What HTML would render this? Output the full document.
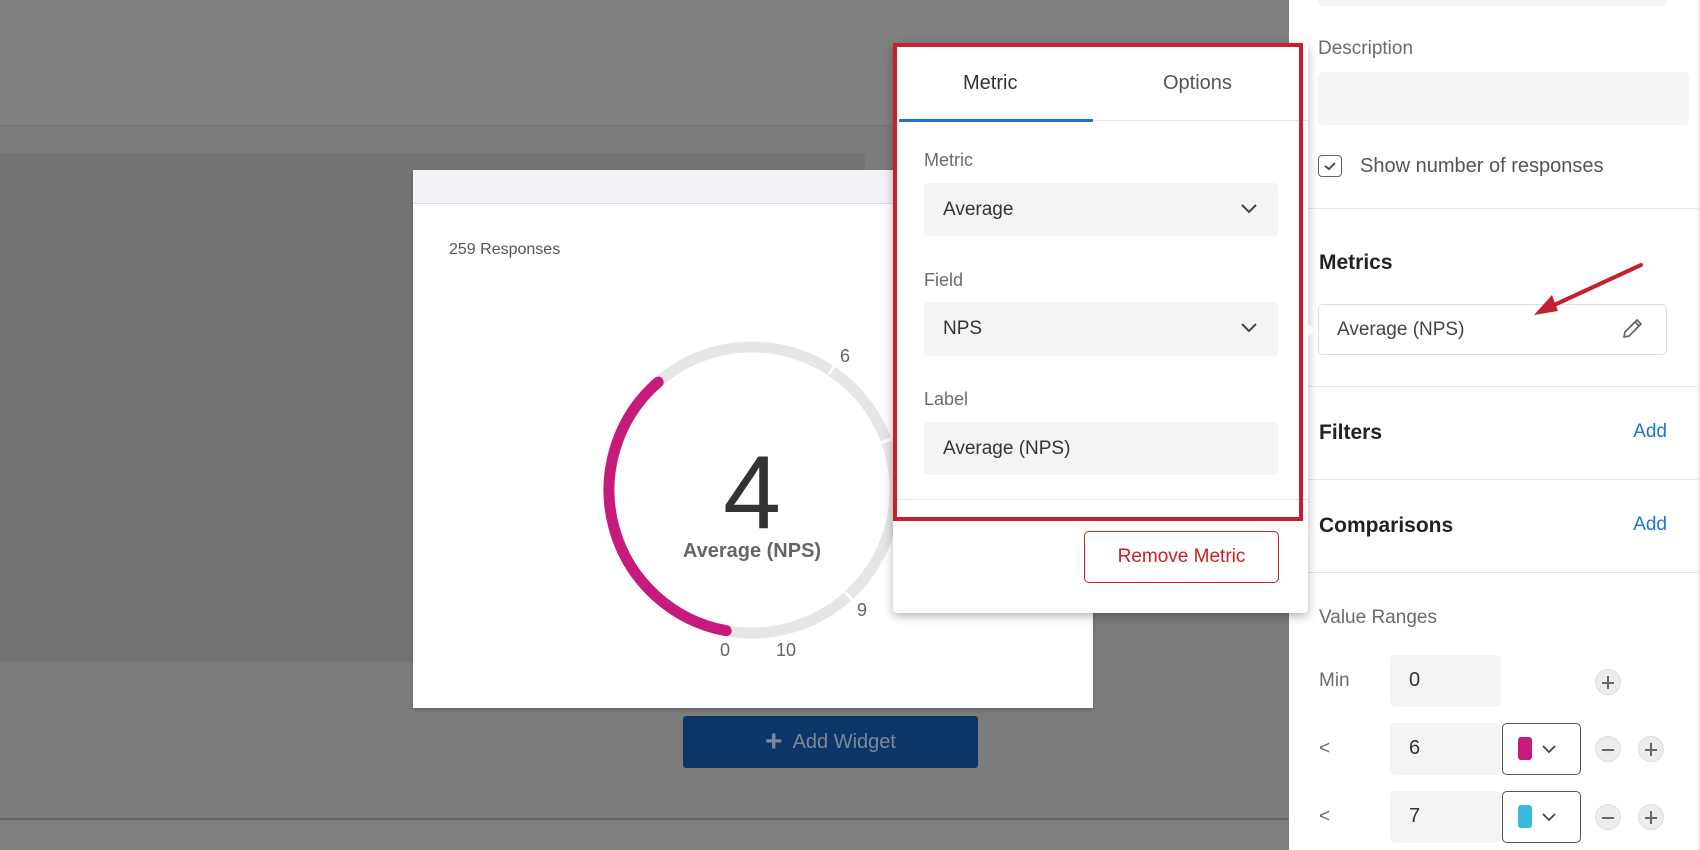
<!DOCTYPE html>
<html><head><meta charset="utf-8"><style>
*{margin:0;padding:0;box-sizing:border-box}
body{width:1700px;height:850px;position:relative;overflow:hidden;background:#7c7c7c;font-family:"Liberation Sans",sans-serif}
.a{position:absolute}
.sel{position:absolute;background:#f4f4f4;border-radius:4px;font-size:19px;color:#333;padding-left:19px;display:flex;align-items:center}
.lbl{position:absolute;font-size:18px;color:#6b6b6b}
.hd{position:absolute;left:1319px;font-size:21px;font-weight:bold;color:#222}
.add{position:absolute;right:33px;font-size:19px;color:#1a73d9}
.dv{position:absolute;left:1308px;right:0;height:1px;background:#e3e3e3}
.circ{position:absolute;width:26px;height:26px;border-radius:50%;background:#ececec;border:1px solid #ddd}
.circ:before{content:"";position:absolute;left:6px;top:12px;width:12px;height:1.6px;background:#666}
.plus:after{content:"";position:absolute;left:11.2px;top:6px;width:1.6px;height:13px;background:#666}
</style></head><body>
<div class="a" style="left:0;top:0;width:1289px;height:125px;background:#808080"></div>
<div class="a" style="left:0;top:125px;width:1289px;height:2px;background:#777"></div>
<div class="a" style="left:0;top:153px;width:865px;height:509px;background:#747474"></div>
<div class="a" style="left:0;top:818px;width:1289px;height:2px;background:#666"></div>
<div class="a" style="left:0;top:820px;width:1289px;height:30px;background:#808080"></div>

<!-- sidebar -->
<div class="a" style="left:1289px;top:0;width:411px;height:850px;background:#fff"></div>
<div class="a" style="left:1698px;top:0;width:2px;height:850px;background:#eee"></div>
<div class="a" style="left:1318px;top:-10px;width:349px;height:16px;background:#f4f4f4;border-radius:5px"></div>
<div class="a" style="left:1318px;top:38px;font-size:19px;color:#6b6b6b">Description</div>
<div class="a" style="left:1318px;top:72px;width:371px;height:53px;background:#f4f4f4;border-radius:5px"></div>
<div class="a" style="left:1318px;top:155px;width:24px;height:22px;border:1.5px solid #666;border-radius:4px"></div>
<svg class="a" style="left:1318px;top:155px" width="24" height="22"><path d="M7 11 L11 14 L17 8" fill="none" stroke="#444" stroke-width="1.8"/></svg>
<div class="a" style="left:1360px;top:155px;font-size:20px;color:#555">Show number of responses</div>
<div class="dv" style="top:208px"></div>
<div class="hd" style="top:251px">Metrics</div>
<div class="a" style="left:1318px;top:304px;width:349px;height:51px;border:1px solid #ddd;border-radius:5px"></div>
<div class="a" style="left:1337px;top:319px;font-size:19px;color:#444">Average (NPS)</div>
<svg class="a" style="left:1620px;top:316px" width="26" height="26"><path d="M4 21 L5 16 L17 4 L21 8 L9 20 Z M15 6 L19 10" fill="none" stroke="#666" stroke-width="1.8" stroke-linejoin="round"/></svg>
<svg class="a" style="left:1290px;top:250px" width="400" height="80"><line x1="351" y1="15" x2="262" y2="56" stroke="#c6202e" stroke-width="4" stroke-linecap="round"/><path d="M244 65 L262 45 L268 61 Z" fill="#c6202e"/></svg>
<div class="dv" style="top:386px"></div>
<div class="hd" style="top:421px">Filters</div><div class="add" style="top:421px">Add</div>
<div class="dv" style="top:479px"></div>
<div class="hd" style="top:514px">Comparisons</div><div class="add" style="top:514px">Add</div>
<div class="dv" style="top:572px"></div>
<div class="a" style="left:1319px;top:607px;font-size:19px;color:#6b6b6b">Value Ranges</div>
<div class="a" style="left:1319px;top:670px;font-size:19px;color:#6b6b6b">Min</div>
<div class="a" style="left:1390px;top:655px;width:111px;height:52px;background:#f4f4f4;border-radius:5px;font-size:20px;color:#333;padding:14px 0 0 19px">0</div>
<div class="circ plus" style="left:1595px;top:669px"></div>
<div class="a" style="left:1319px;top:738px;font-size:19px;color:#6b6b6b">&lt;</div>
<div class="a" style="left:1390px;top:723px;width:111px;height:52px;background:#f4f4f4;border-radius:5px;font-size:20px;color:#333;padding:14px 0 0 19px">6</div>
<div class="a" style="left:1502px;top:723px;width:79px;height:52px;border:1.5px solid #555;border-radius:5px"></div>
<div class="a" style="left:1518px;top:737px;width:14px;height:23px;background:#c61a7c;border-radius:3px"></div>
<div class="circ" style="left:1595px;top:736px"></div><div class="circ plus" style="left:1638px;top:736px"></div>
<div class="a" style="left:1319px;top:806px;font-size:19px;color:#6b6b6b">&lt;</div>
<div class="a" style="left:1390px;top:791px;width:111px;height:52px;background:#f4f4f4;border-radius:5px;font-size:20px;color:#333;padding:14px 0 0 19px">7</div>
<div class="a" style="left:1502px;top:791px;width:79px;height:52px;border:1.5px solid #555;border-radius:5px"></div>
<div class="a" style="left:1518px;top:805px;width:14px;height:23px;background:#3bb8e0;border-radius:3px"></div>
<div class="circ" style="left:1595px;top:804px"></div><div class="circ plus" style="left:1638px;top:804px"></div>
<svg class="a" style="left:1540px;top:740px" width="20" height="90"><path d="M3 6 L9 12 L15 6" fill="none" stroke="#444" stroke-width="1.8"/><path d="M3 74 L9 80 L15 74" fill="none" stroke="#444" stroke-width="1.8"/></svg>

<!-- card -->
<div class="a" style="left:413px;top:170px;width:680px;height:538px;background:#fff;box-shadow:0 2px 4px rgba(0,0,0,.2)">
 <div class="a" style="left:0;top:0;width:680px;height:34px;background:#f3f3f7;border-bottom:1px solid #ddd"></div>
 <div class="a" style="left:36px;top:71px;font-size:16px;color:#555">259 Responses</div>
</div>
<svg class="a" style="left:0;top:0" width="1100" height="720">
 <circle cx="752" cy="490" r="143" fill="none" stroke="#e6e6e6" stroke-width="11" stroke-dasharray="687 212" transform="rotate(229 752 490)" stroke-linecap="round"/>
 <path d="M 726.2 630.7 A 143 143 0 0 1 658.2 382.1" fill="none" stroke="#c61a7c" stroke-width="11" stroke-linecap="round"/>
 <g stroke="#fff" stroke-width="3">
  <line x1="829" y1="374" x2="843" y2="352"/>
  <line x1="845" y1="592" x2="860" y2="608"/>
  <line x1="880" y1="443" x2="902" y2="435"/>
 </g>
 <g font-family="Liberation Sans" font-size="18" fill="#666" text-anchor="middle">
  <text x="845" y="362">6</text><text x="862" y="616">9</text><text x="725" y="656">0</text><text x="786" y="656">10</text>
 </g>
 <text x="752" y="528" font-family="Liberation Sans" font-size="104" font-weight="300" fill="#333" text-anchor="middle">4</text>
 <text x="752" y="557" font-family="Liberation Sans" font-size="20" font-weight="bold" fill="#666" text-anchor="middle">Average (NPS)</text>
</svg>

<div class="a" style="left:683px;top:716px;width:295px;height:52px;background:#0d3668;border-radius:3px;color:#7d8896;font-size:20px;display:flex;align-items:center;justify-content:center"><span style="font-size:30px;font-weight:bold;margin-right:10px;color:#7d8896">+</span>Add Widget</div>

<!-- popup -->
<div class="a" style="left:893px;top:43px;width:415px;height:570px;background:#fff;border-radius:4px;box-shadow:0 3px 10px rgba(0,0,0,.3)">
 <div class="a" style="left:0;top:77px;width:415px;height:1px;background:#e5e5e5"></div>
 <div class="a" style="left:6px;top:76px;width:194px;height:3px;background:#1a73d9"></div>
 <div class="a" style="left:70px;top:29px;font-size:20px;color:#333">Metric</div>
 <div class="a" style="left:270px;top:29px;font-size:20px;color:#555">Options</div>
 <div class="a" style="left:0;top:456px;width:415px;height:1px;background:#e5e5e5"></div>
 <div class="a" style="left:191px;top:488px;width:195px;height:52px;border:1.5px solid #c62128;border-radius:5px;color:#c62128;font-size:19px;display:flex;align-items:center;justify-content:center">Remove Metric</div>
</div>
<div class="a" style="left:1306px;top:322px;width:0;height:0;border:8px solid transparent;border-left-color:#fff"></div>
<div class="a" style="left:893px;top:43px;width:410px;height:478px;border:4px solid #c6202e"></div>
<div class="lbl" style="left:924px;top:150px">Metric</div>
<div class="sel" style="left:924px;top:183px;width:354px;height:53px">Average</div>
<div class="lbl" style="left:924px;top:270px">Field</div>
<div class="sel" style="left:924px;top:302px;width:354px;height:54px">NPS</div>
<div class="lbl" style="left:924px;top:389px">Label</div>
<div class="sel" style="left:924px;top:422px;width:354px;height:53px">Average (NPS)</div>
<svg class="a" style="left:1240px;top:200px" width="20" height="140"><path d="M2 5 L9 12 L16 5" fill="none" stroke="#444" stroke-width="2"/><path d="M2 124 L9 131 L16 124" fill="none" stroke="#444" stroke-width="2"/></svg>
</body></html>
